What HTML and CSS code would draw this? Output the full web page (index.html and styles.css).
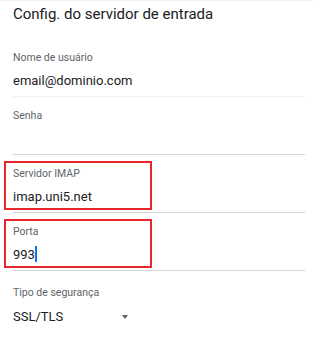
FILE: index.html
```html
<!DOCTYPE html>
<html lang="pt-BR">
<head>
    <meta charset="UTF-8">
    <meta name="viewport" content="width=device-width, initial-scale=1.0">
    <title>Config. do servidor de entrada</title>
    <link rel="stylesheet" href="styles.css">
</head>
<body>

    <div class="screen">
        <h1 class="title">Config. do servidor de entrada</h1>

        <div class="field field-light">
            <div class="field-label">Nome de usuário</div>
            <div class="field-value">email@dominio.com</div>
        </div>

        <div class="field">
            <div class="field-label">Senha</div>
            <div class="field-value"></div>
        </div>

        <!-- highlighted fields -->
        <div class="field marked">
            <div class="field-label">Servidor IMAP</div>
            <div class="field-value">imap.uni5.net</div>
        </div>

        <div class="field marked">
            <div class="field-label">Porta</div>
            <div class="field-value">993<span class="caret"></span></div>
        </div>

        <div class="field field-select">
            <div class="field-label">Tipo de segurança</div>
            <div class="field-value select-value">
                <span>SSL/TLS</span>
                <span class="select-arrow"></span>
            </div>
        </div>
    </div>

</body>
</html>
```

FILE: styles.css
```css
body {
    margin: 0;
    font-family: Roboto, "Noto Sans", Arial, sans-serif;
    background-color: #ffffff;
    color: #202124;
    border-top: 1px solid #f5eeee;
}

.screen {
    padding: 0 8px 0 13px;
}

.title {
    font-size: 15px;
    font-weight: 400;
    line-height: 20px;
    margin: 0;
    padding-top: 3px;
    margin-bottom: 15px;
}

.field {
    position: relative;
    padding: 11px 0 5px;
    border-bottom: 1px solid #d4d4d4;
}

.field-light {
    border-bottom-color: #f0f0f0;
}

.field-select {
    padding-top: 14px;
    border-bottom: none;
}

.field-label {
    font-size: 10.5px;
    line-height: 15px;
    color: #5f6368;
}

.field-value {
    font-size: 13px;
    line-height: 20px;
    height: 20px;
    margin-top: 6px;
}

.caret {
    display: inline-block;
    width: 2px;
    height: 16px;
    background-color: #1a73e8;
    vertical-align: -3px;
}

.marked::after {
    content: "";
    position: absolute;
    left: -9px;
    top: 6px;
    bottom: 2px;
    width: 148px;
    border: 2px solid #e8262b;
    box-sizing: border-box;
}

.select-value {
    display: flex;
    align-items: center;
    gap: 59px;
    margin-top: 7px;
}

.select-arrow {
    width: 0;
    height: 0;
    border-left: 3.5px solid transparent;
    border-right: 3.5px solid transparent;
    border-top: 4px solid #5f6368;
}
```
